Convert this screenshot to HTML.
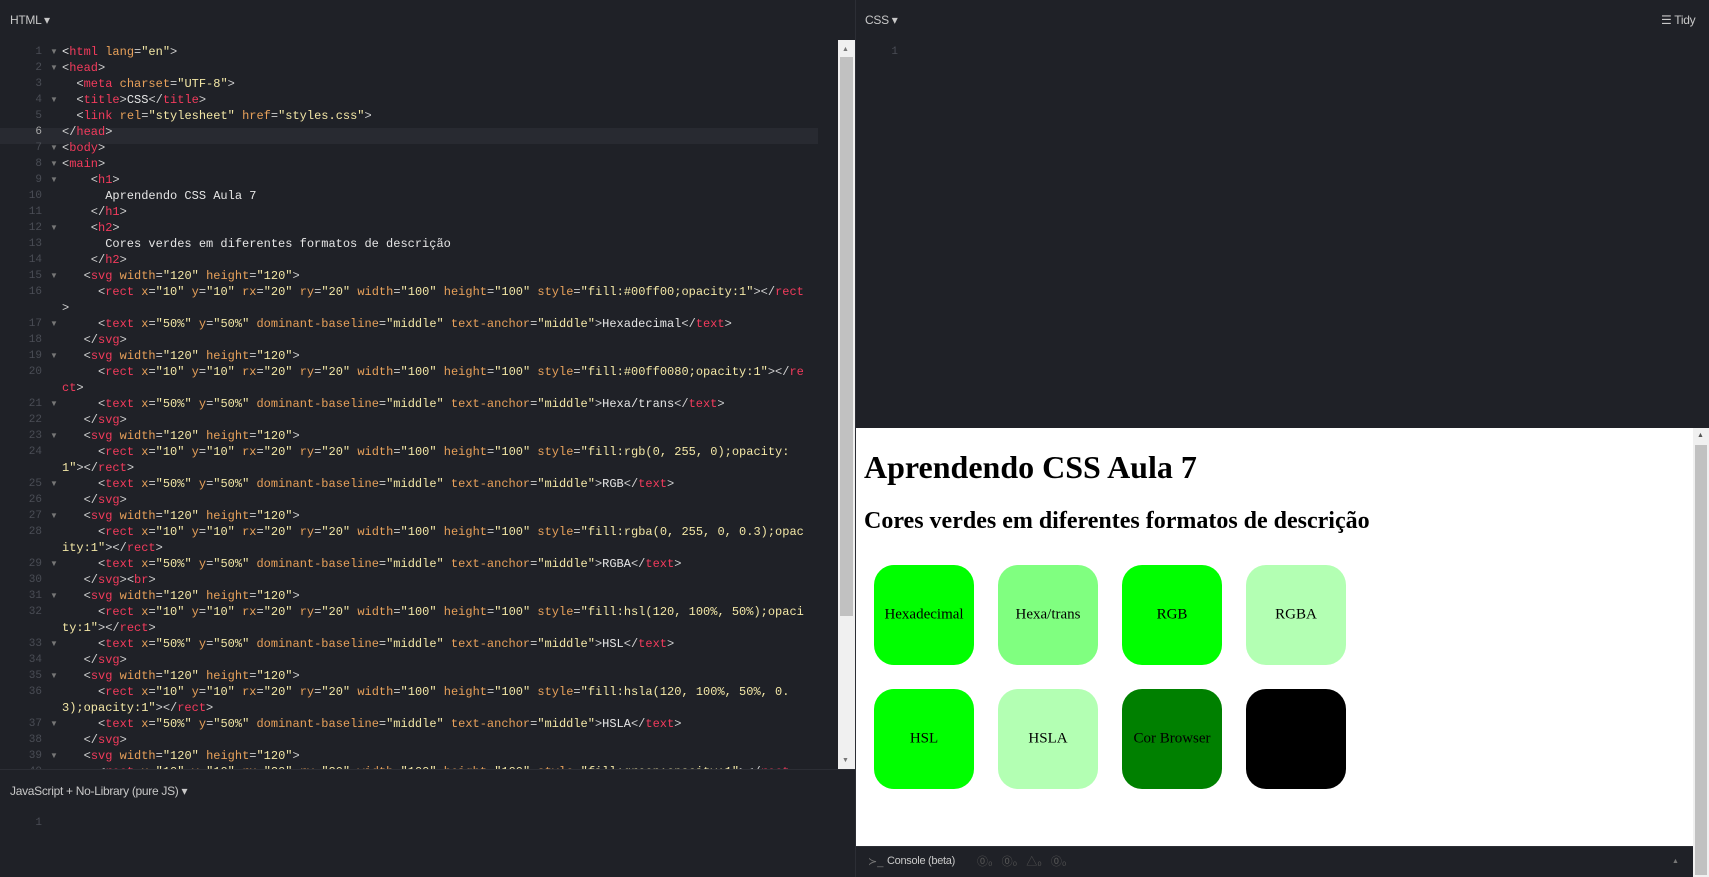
<!DOCTYPE html>
<html><head><meta charset="utf-8"><style>
*{margin:0;padding:0;box-sizing:border-box}
body{width:1709px;height:877px;overflow:hidden;background:#1f2127;font-family:"Liberation Sans",sans-serif;position:relative}
.hdr{position:absolute;color:#c8c8c8;font-size:12px;letter-spacing:-0.3px}
.code{position:absolute;left:0;top:40px;width:838px;height:730px;overflow:hidden}
.l{position:absolute;left:62px;height:16px;line-height:16px;font-family:"Liberation Mono",monospace;font-size:12px;color:#d0d0d0;white-space:pre}
.n{position:absolute;width:42px;text-align:right;left:0;height:16px;line-height:16px;font-family:"Liberation Mono",monospace;font-size:11px;color:#4a4d55}
.f{position:absolute;left:50px;font-size:8px;color:#777;height:16px;line-height:16px}
.t{color:#f23b5c}.a{color:#e8a15a}.s{color:#f3e7a6}.w{color:#e6e6e6}
.prev{position:absolute;left:856px;top:428px;width:837px;height:418px;background:#fff;overflow:hidden}
.prev .in{margin:8px;font-family:"Liberation Serif",serif;color:#000}
.prev h1{font-size:32px;margin:21px 0 21px;line-height:37px}
.prev h2{font-size:24px;margin:0 0 20px;line-height:28px}
svg text{font-family:"Liberation Serif",serif;font-size:15px}
</style></head><body>
<div class="hdr" style="left:10px;top:13px">HTML ▾</div>
<div class="code">
<div style="position:absolute;left:0;top:88px;width:818px;height:16px;background:#282a31"></div>
<div id="lines"></div>
</div>
<div style="position:absolute;left:838px;top:40px;width:17px;height:730px;background:#f0f0f0"></div>
<div style="position:absolute;left:840px;top:57px;width:13px;height:559px;background:#c1c1c1"></div>
<div style="position:absolute;left:842px;top:46px;font-size:7px;color:#777">▲</div>
<div style="position:absolute;left:842px;top:757px;font-size:7px;color:#777">▼</div>
<div style="position:absolute;left:0;top:769px;width:855px;height:1px;background:#2c2e35"></div>
<div class="hdr" style="left:10px;top:784px">JavaScript + No-Library (pure JS) ▾</div>
<div class="n" style="top:815px">1</div>
<div style="position:absolute;left:855px;top:0;width:1px;height:877px;background:#2c2e35"></div>
<div class="hdr" style="left:865px;top:13px">CSS ▾</div>
<div class="hdr" style="left:1661px;top:13px">☰ Tidy</div>
<div class="n" style="top:44px;left:855px;width:43px">1</div>
<div class="prev"><div class="in">
<h1>Aprendendo CSS Aula 7</h1>
<h2>Cores verdes em diferentes formatos de descrição</h2>
<div style="font-size:16px;line-height:1">
<svg width="120" height="120"><rect x="10" y="10" rx="20" ry="20" width="100" height="100" fill="#00ff00"/><text x="50%" y="50%" dominant-baseline="middle" text-anchor="middle">Hexadecimal</text></svg>
<svg width="120" height="120"><rect x="10" y="10" rx="20" ry="20" width="100" height="100" fill="#80ff80"/><text x="50%" y="50%" dominant-baseline="middle" text-anchor="middle">Hexa/trans</text></svg>
<svg width="120" height="120"><rect x="10" y="10" rx="20" ry="20" width="100" height="100" fill="#00ff00"/><text x="50%" y="50%" dominant-baseline="middle" text-anchor="middle">RGB</text></svg>
<svg width="120" height="120"><rect x="10" y="10" rx="20" ry="20" width="100" height="100" fill="#b3ffb3"/><text x="50%" y="50%" dominant-baseline="middle" text-anchor="middle">RGBA</text></svg><br>
<svg width="120" height="120"><rect x="10" y="10" rx="20" ry="20" width="100" height="100" fill="#00ff00"/><text x="50%" y="50%" dominant-baseline="middle" text-anchor="middle">HSL</text></svg>
<svg width="120" height="120"><rect x="10" y="10" rx="20" ry="20" width="100" height="100" fill="#b3ffb3"/><text x="50%" y="50%" dominant-baseline="middle" text-anchor="middle">HSLA</text></svg>
<svg width="120" height="120"><rect x="10" y="10" rx="20" ry="20" width="100" height="100" fill="#008000"/><text x="50%" y="50%" dominant-baseline="middle" text-anchor="middle">Cor Browser</text></svg>
<svg width="120" height="120"><rect x="10" y="10" rx="20" ry="20" width="100" height="100" fill="#000"/></svg>
</div></div></div>
<div style="position:absolute;left:1693px;top:428px;width:16px;height:449px;background:#f0f0f0"></div>
<div style="position:absolute;left:1695px;top:445px;width:12px;height:430px;background:#c1c1c1"></div>
<div style="position:absolute;left:1697px;top:432px;font-size:7px;color:#555">▲</div>
<div style="position:absolute;left:856px;top:846px;width:837px;height:31px;background:#1f2127;border-top:1px solid #2c2e35"></div>
<div style="position:absolute;left:868px;top:855px;font-size:11px;color:#777">≻_</div>
<div style="position:absolute;left:887px;top:855px;font-size:11px;color:#c8c8c8;letter-spacing:-0.3px">Console (beta)</div>
<div style="position:absolute;left:977px;top:853px;font-size:11px;color:#555;word-spacing:6px">⓪₀ ⓪₀ △₀ ⓪₀</div>
<div style="position:absolute;left:1672px;top:858px;font-size:7px;color:#777">▲</div>
<script>
var rows=[
[1,1,'<span class="w">&lt;</span><span class="t">html</span> <span class="a">lang</span>=<span class="s">"en"</span>&gt;'],
[2,1,'&lt;<span class="t">head</span>&gt;'],
[3,0,'  &lt;<span class="t">meta</span> <span class="a">charset</span>=<span class="s">"UTF-8"</span>&gt;'],
[4,1,'  &lt;<span class="t">title</span>&gt;<span class="w">CSS</span>&lt;/<span class="t">title</span>&gt;'],
[5,0,'  &lt;<span class="t">link</span> <span class="a">rel</span>=<span class="s">"stylesheet"</span> <span class="a">href</span>=<span class="s">"styles.css"</span>&gt;'],
[6,0,'&lt;/<span class="t">head</span>&gt;'],
[7,1,'&lt;<span class="t">body</span>&gt;'],
[8,1,'&lt;<span class="t">main</span>&gt;'],
[9,1,'    &lt;<span class="t">h1</span>&gt;'],
[10,0,'<span class="w">      Aprendendo CSS Aula 7</span>'],
[11,0,'    &lt;/<span class="t">h1</span>&gt;'],
[12,1,'    &lt;<span class="t">h2</span>&gt;'],
[13,0,'<span class="w">      Cores verdes em diferentes formatos de descrição</span>'],
[14,0,'    &lt;/<span class="t">h2</span>&gt;']];
function svg(n){return [n,1,'   &lt;<span class="t">svg</span> <span class="a">width</span>=<span class="s">"120"</span> <span class="a">height</span>=<span class="s">"120"</span>&gt;']}
function rect(n,st,cont){return [[n,0,'     &lt;<span class="t">rect</span> <span class="a">x</span>=<span class="s">"10"</span> <span class="a">y</span>=<span class="s">"10"</span> <span class="a">rx</span>=<span class="s">"20"</span> <span class="a">ry</span>=<span class="s">"20"</span> <span class="a">width</span>=<span class="s">"100"</span> <span class="a">height</span>=<span class="s">"100"</span> <span class="a">style</span>='+st],[0,0,cont]]}
function txt(n,w){return [n,1,'     &lt;<span class="t">text</span> <span class="a">x</span>=<span class="s">"50%"</span> <span class="a">y</span>=<span class="s">"50%"</span> <span class="a">dominant-baseline</span>=<span class="s">"middle"</span> <span class="a">text-anchor</span>=<span class="s">"middle"</span>&gt;<span class="w">'+w+'</span>&lt;/<span class="t">text</span>&gt;']}
function end(n,br){return [n,0,'   &lt;/<span class="t">svg</span>&gt;'+(br?'&lt;<span class="t">br</span>&gt;':'')]}
var data=[
[15,'<span class="s">"fill:#00ff00;opacity:1"</span>&gt;&lt;/<span class="t">rect</span>','&gt;','Hexadecimal'],
[19,'<span class="s">"fill:#00ff0080;opacity:1"</span>&gt;&lt;/<span class="t">re</span>','<span class="t">ct</span>&gt;','Hexa/trans'],
[23,'<span class="s">"fill:rgb(0, 255, 0);opacity:</span>','<span class="s">1"</span>&gt;&lt;/<span class="t">rect</span>&gt;','RGB'],
[27,'<span class="s">"fill:rgba(0, 255, 0, 0.3);opac</span>','<span class="s">ity:1"</span>&gt;&lt;/<span class="t">rect</span>&gt;','RGBA'],
[31,'<span class="s">"fill:hsl(120, 100%, 50%);opaci</span>','<span class="s">ty:1"</span>&gt;&lt;/<span class="t">rect</span>&gt;','HSL'],
[35,'<span class="s">"fill:hsla(120, 100%, 50%, 0.</span>','<span class="s">3);opacity:1"</span>&gt;&lt;/<span class="t">rect</span>&gt;','HSLA']];
data.forEach(function(d){var n=d[0];rows.push(svg(n));var r=rect(n+1,d[1],d[2]);rows.push(r[0],r[1]);rows.push(txt(n+2,d[3]));rows.push(end(n+3,n==27));});
rows.push(svg(39));rows.push(rect(40,'<span class="s">"fill:green;opacity:1"</span>&gt;&lt;/<span class="t">rect</span>','')[0]);
var h='';rows.forEach(function(r,i){var y=4+16*i;if(r[0])h+='<div class="n" style="top:'+y+'px'+(r[0]==6?';color:#aaa':'')+'">'+r[0]+'</div>';if(r[1])h+='<div class="f" style="top:'+y+'px">▼</div>';h+='<div class="l" style="top:'+y+'px">'+r[2]+'</div>';});
document.getElementById('lines').innerHTML=h;
</script>
</body></html>
